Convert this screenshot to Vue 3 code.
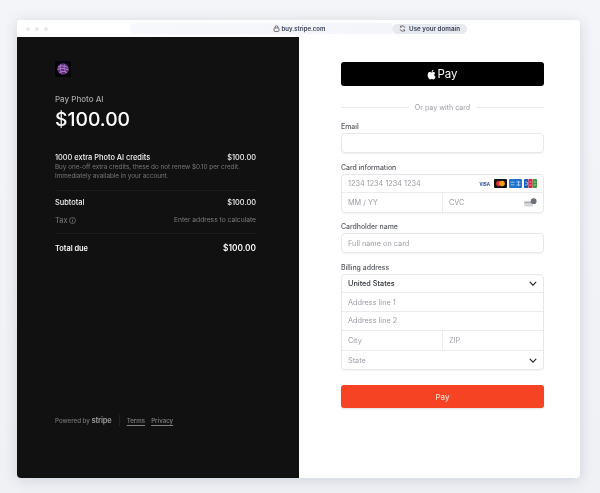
<template>
  <div class="page">
    <div class="window">
      <div class="titlebar">
        <div class="dots"><i></i><i></i><i></i></div>
        <div class="urlbar">
          <svg class="lock" viewBox="0 0 10 10" width="7" height="7"><rect x="1.5" y="4.2" width="7" height="5" rx="1" fill="none" stroke="#444" stroke-width="1" /><path d="M3 4.2V3a2 2 0 0 1 4 0v1.2" fill="none" stroke="#444" stroke-width="1" /></svg>
          <span class="url">buy.stripe.com</span>
        </div>
        <div class="domain">
          <svg viewBox="0 0 10 10" width="7" height="7"><path d="M8.5 4A3.6 3.6 0 0 0 2 2.8M1.5 6A3.6 3.6 0 0 0 8 7.2M2 1v2h2M8 9V7H6" fill="none" stroke="#444" stroke-width="1" /></svg>
          <span>Use your domain</span>
        </div>
      </div>
      <div class="body">
        <aside class="summary">
          <div class="logo">
            <svg viewBox="0 0 16 16" width="16" height="16">
              <rect width="16" height="16" fill="#060408" />
              <circle cx="8" cy="8" r="5.8" fill="#5a2f78" />
              <path d="M3 6c3-1.500 6-1.500 10 .5M2.500 8.500c3-1.500 7-1.500 11 .5M4.500 11.500c2-1.500 5-1.500 7.500 0" fill="none" stroke="#dc8fcf" stroke-width=".8" />
              <path d="M6 3c-1.500 3-1 7 1 10M10 3c-1.500 2.500-1 6.500 1.500 9" fill="none" stroke="#a08ae2" stroke-width=".7" />
            </svg>
          </div>
          <div class="pay-to">Pay Photo AI</div>
          <div class="amount">$100.00</div>
          <div class="item">
            <div class="row strong">
              <span>1000 extra Photo AI credits</span>
              <span>$100.00</span>
            </div>
            <p class="item-desc">Buy one-off extra credits, these do not renew $0.10 per credit.<br />Immediately available in your account.</p>
          </div>
          <div class="row strong subtotal">
            <span>Subtotal</span>
            <span>$100.00</span>
          </div>
          <div class="row muted tax">
            <span class="tax-label">Tax
              <svg viewBox="0 0 10 10" width="7" height="7"><circle cx="5" cy="5" r="4.300" fill="none" stroke="#8a8a8a" stroke-width=".9" /><path d="M5 4.500v3M5 2.500v1" stroke="#8a8a8a" stroke-width="1" /></svg>
            </span>
            <span>Enter address to calculate</span>
          </div>
          <div class="row total">
            <span>Total due</span>
            <span class="total-num">$100.00</span>
          </div>
          <div class="foot">
            <span>Powered by <b class="stripe">stripe</b></span>
            <span class="foot-sep"></span>
            <a>Terms</a>
            <a>Privacy</a>
          </div>
        </aside>
        <main class="form">
          <button class="apple">
            <svg viewBox="0 0 14 16" width="9" height="11"><path fill="#fff" d="M11.300 8.500c0-1.900 1.500-2.800 1.600-2.900-.9-1.300-2.300-1.500-2.800-1.500-1.200-.1-2.300.7-2.900.7-.6 0-1.500-.7-2.500-.7-1.300 0-2.500.8-3.100 1.900-1.400 2.300-.4 5.800 1 7.700.6.900 1.400 2 2.400 1.900 1-.1 1.300-.6 2.500-.6s1.500.6 2.500.6c1 0 1.700-.9 2.300-1.900.7-1.100 1-2.100 1-2.200-.1 0-2-.7-2-3zM9.400 2.900c.5-.7.900-1.500.8-2.400-.8 0-1.700.5-2.200 1.200-.5.600-.9 1.500-.8 2.300.9.100 1.700-.4 2.200-1.100z" /></svg>
            <span>Pay</span>
          </button>
          <div class="divider"><span>Or pay with card</span></div>

          <label class="label">Email</label>
          <div class="box single"></div>

          <label class="label">Card information</label>
          <div class="box">
            <div class="cell tight line">
              <span class="ph">1234 1234 1234 1234</span>
              <div class="brands">
                <svg viewBox="0 0 13 9" width="13" height="9"><text x="0.500" y="6.500" class="visa">VISA</text></svg>
                <svg viewBox="0 0 13 9" width="13" height="9"><rect width="13" height="9" rx="1" fill="#111" /><circle cx="5" cy="4.500" r="2.800" fill="#e8312a" /><circle cx="8" cy="4.500" r="2.800" fill="#f59b1e" /></svg>
                <svg viewBox="0 0 13 9" width="13" height="9"><rect width="13" height="9" rx="1" fill="#1f72cd" /><path d="M1.500 3.200h4M1.500 5.800h4M7.500 3h4M7.500 6h4M9.500 2v5" stroke="#bcd9f5" stroke-width=".8" /></svg>
                <svg viewBox="0 0 13 9" width="13" height="9"><rect x="0" width="4.300" height="9" rx="1" fill="#1a5eb0" /><rect x="4.350" width="4.300" height="9" rx="1" fill="#d5263f" /><rect x="8.700" width="4.300" height="9" rx="1" fill="#3c9b3a" /><path d="M1 3h2.300v3H1M5.300 3h2.300M5.300 6h2.300M9.700 3h2.300M9.700 6h2.300" fill="none" stroke="#e8eef5" stroke-width=".6" /></svg>
              </div>
            </div>
            <div class="split">
              <div class="cell tight half"><span class="ph">MM / YY</span></div>
              <div class="cell tight half">
                <span class="ph">CVC</span>
                <svg viewBox="0 0 14 10" width="13" height="9"><rect x="0" y="3" width="10" height="6.500" rx="1" fill="#d5d7db" /><rect x="0" y="4.500" width="10" height="1.200" fill="#a9acb2" /><circle cx="10.500" cy="3.500" r="3.200" fill="#6e7177" /></svg>
              </div>
            </div>
          </div>

          <label class="label">Cardholder name</label>
          <div class="box single"><span class="ph">Full name on card</span></div>

          <label class="label">Billing address</label>
          <div class="box">
            <div class="cell line">
              <span class="val">United States</span>
              <svg viewBox="0 0 10 6" width="8" height="5"><path d="M1 1l4 4 4-4" fill="none" stroke="#222" stroke-width="1.400" /></svg>
            </div>
            <div class="cell line"><span class="ph">Address line 1</span></div>
            <div class="cell line"><span class="ph">Address line 2</span></div>
            <div class="split line">
              <div class="cell half"><span class="ph">City</span></div>
              <div class="cell half"><span class="ph">ZIP</span></div>
            </div>
            <div class="cell">
              <span class="ph">State</span>
              <svg viewBox="0 0 10 6" width="8" height="5"><path d="M1 1l4 4 4-4" fill="none" stroke="#222" stroke-width="1.400" /></svg>
            </div>
          </div>

          <button class="pay">Pay</button>
        </main>
      </div>
    </div>
  </div>
</template>

<script setup>
</script>

<style>
html, body { margin: 0; background: #f2f3f7; }
</style>

<style scoped>
.page {
  width: 600px;
  height: 493px;
  box-sizing: border-box;
  padding: 20px 20px 15px 17px;
  background: linear-gradient(180deg, #f4f5f8 0%, #eff1f5 100%);
  font-family: Inter, "Liberation Sans", sans-serif;
  overflow: hidden;
}
.window {
  height: 458px;
  border-radius: 4px;
  overflow: hidden;
  background: #fff;
  display: flex;
  flex-direction: column;
  box-shadow: 0 2px 14px rgba(60, 66, 87, 0.18);
  will-change: transform;
}
.titlebar {
  height: 17px;
  flex-shrink: 0;
  display: flex;
  align-items: center;
  padding-left: 9px;
  background: #fff;
}
.dots { display: flex; gap: 5px; width: 104px; }
.dots i { width: 4px; height: 4px; border-radius: 50%; background: #e8eaee; }
.urlbar {
  width: 262px;
  height: 11px;
  box-sizing: border-box;
  padding-left: 76px;
  background: linear-gradient(90deg, #f6f8fc 0%, #f3f5fa 100%);
  border-radius: 5px 0 0 5px;
  display: flex;
  align-items: center;
  justify-content: center;
  gap: 2px;
  font-size: 6px;
  font-weight: 600;
  color: #3c4257;
}
.domain {
  width: 75px;
  height: 10px;
  box-sizing: border-box;
  background: #e6e9f0;
  border-radius: 5px;
  display: flex;
  align-items: center;
  justify-content: center;
  gap: 3px;
  font-size: 6.250px;
  font-weight: 600;
  color: #3c4257;
}
.body { flex: 1; display: flex; min-height: 0; }
.summary {
  width: 282px;
  box-sizing: border-box;
  padding: 24px 43px 0 38px;
  background: #111111;
  display: flex;
  flex-direction: column;
  color: #fff;
}
.logo { height: 16px; line-height: 0; }
.pay-to {
  margin-top: 16px;
  font-size: 8px;
  font-weight: 500;
  line-height: 13px;
  color: #a6a6a6;
}
.amount {
  margin-top: 1px;
  font-size: 19.300px;
  font-weight: 500;
  line-height: 25px;
  color: #fff;
}
.item { margin-top: 20px; padding-bottom: 9.500px; border-bottom: 1px solid #1d1d1d; }
.row { display: flex; justify-content: space-between; align-items: center; line-height: 11px; }
.strong { font-size: 7.400px; font-weight: 500; color: #f2f2f2; }
.item-desc {
  margin: 0;
  font-size: 6.300px;
  line-height: 8.500px;
  color: #787878;
}
.subtotal { margin-top: 6px; }
.muted { font-size: 6.700px; color: #7c7c7c; }
.tax { margin-top: 7px; padding-bottom: 7.500px; border-bottom: 1px solid #1d1d1d; }
.tax-label { display: flex; align-items: center; gap: 2px; font-size: 7.400px; }
.total { margin-top: 8.500px; font-size: 7.400px; font-weight: 600; color: #f7f7f7; }
.total-num { font-size: 8.300px; }
.foot {
  margin-top: auto;
  margin-bottom: 52px;
  display: flex;
  align-items: center;
  gap: 6px;
  font-size: 6.200px;
  font-weight: 500;
  line-height: 10px;
  color: #757575;
}
.stripe { font-size: 7.500px; font-weight: 700; color: #8f8f8f; letter-spacing: -0.2px; }
.foot-sep { width: 1px; height: 11px; margin: 0 1px; background: #222; }
.foot a { color: #808080; text-decoration: underline; text-underline-offset: 1.500px; }
.form {
  flex: 1;
  padding: 25px 36px 0 42px;
  display: flex;
  flex-direction: column;
  color: #444;
}
.apple {
  height: 24px;
  border: 0;
  border-radius: 3px;
  padding: 0;
  background: #000;
  color: #fff;
  font-family: inherit;
  font-size: 11.500px;
  display: flex;
  align-items: center;
  justify-content: center;
  gap: 1px;
}
.divider {
  margin-top: 15px;
  height: 12px;
  display: flex;
  align-items: center;
  gap: 6px;
  font-size: 7.100px;
  color: #9a9da3;
}
.divider::before, .divider::after { content: ""; flex: 1; height: 1px; background: #ececee; }
.label {
  display: block;
  font-size: 6.900px;
  font-weight: 500;
  line-height: 9.500px;
  color: #55585f;
  margin-top: 9.500px;
  margin-bottom: 1.500px;
}
.divider + .label { margin-top: 8.500px; margin-bottom: 2px; }
.box {
  border: 1px solid #e6e7ea;
  border-radius: 4px;
  box-shadow: 0 1px 1.500px rgba(0, 0, 0, 0.05);
  background: #fff;
}
.single {
  height: 20px;
  box-sizing: border-box;
  display: flex;
  align-items: center;
  padding: 0 6px;
}
.cell {
  height: 18.800px;
  display: flex;
  align-items: center;
  justify-content: space-between;
  padding: 0 6px;
  box-sizing: border-box;
}
.tight { height: 18.500px; }
.line { border-bottom: 1px solid #eaebee; }
.split { display: flex; }
.half { width: 100px; }
.half + .half { flex: 1; border-left: 1px solid #eaebee; }
.ph { font-size: 7.300px; color: #9b9ea4; }
.val { font-size: 7.300px; font-weight: 500; color: #33363c; }
.brands { display: flex; align-items: center; gap: 2px; }
.visa { font: 800 4.500px "Liberation Sans", sans-serif; fill: #1a3a8c; }
.pay {
  margin-top: 15px;
  height: 23px;
  border: 0;
  border-radius: 3px;
  background: #f54323;
  color: #fbd5cc;
  font-family: inherit;
  font-size: 8px;
  font-weight: 500;
  box-shadow: 0 1px 2px rgba(0, 0, 0, 0.12);
}
</style>
